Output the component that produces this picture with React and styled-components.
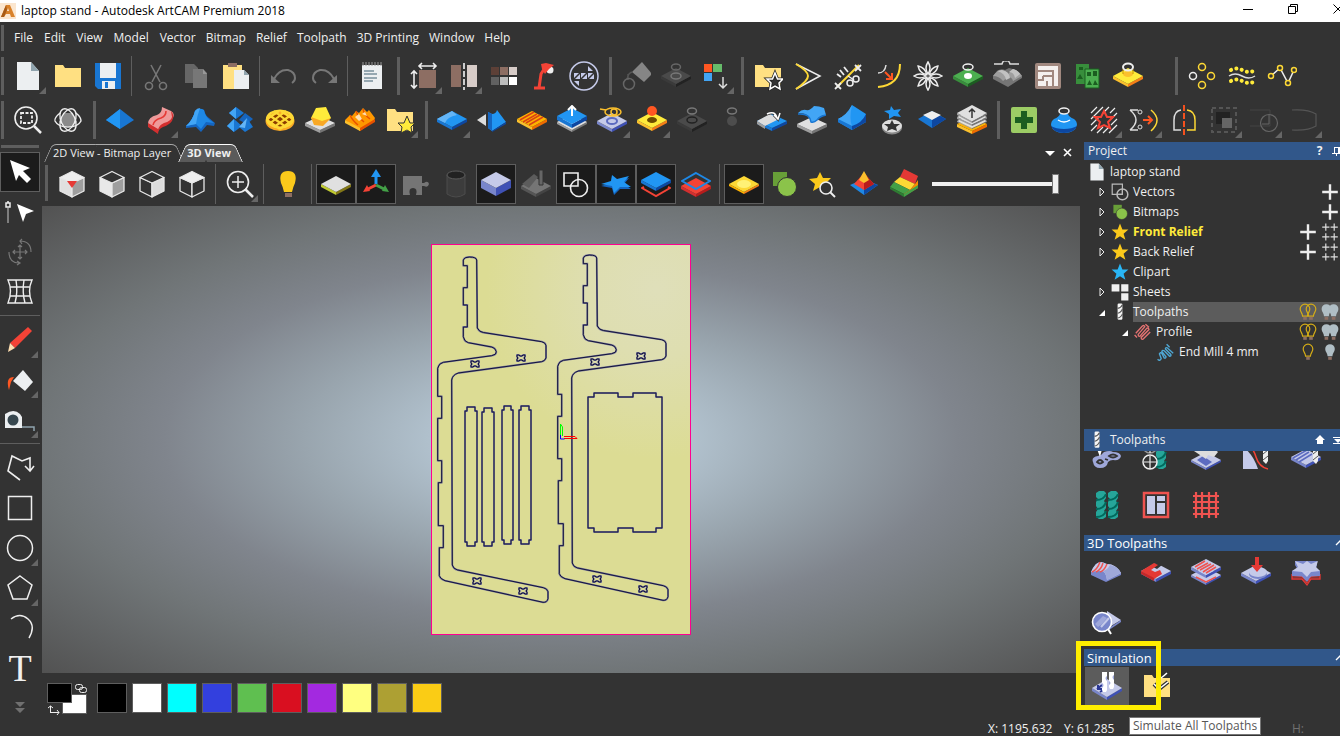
import { useState } from "react"
import styled, { createGlobalStyle, css } from "styled-components"

// ---------- drawing helpers, every icon lives in a 30x30 box ----------

function Slab({ x = 15, y = 14, w = 15, h = 8, t = 3, top, left, right }) {
  return (
    <>
      <path d={`M${x - w} ${y}L${x} ${y + h}v${t}L${x - w} ${y + t}z`} fill={left} />
      <path d={`M${x + w} ${y}L${x} ${y + h}v${t}L${x + w} ${y + t}z`} fill={right} />
      <path d={`M${x} ${y - h}L${x + w} ${y}L${x} ${y + h}L${x - w} ${y}z`} fill={top} />
    </>
  )
}

const BLUE = { top: "#2196f3", left: "#1976d2", right: "#0d47a1" }
const LILAC = { top: "#c5cae9", left: "#7986cb", right: "#3f51b5" }
const YELLOW = { top: "#ffeb3b", left: "#fbc02d", right: "#f57f17" }
const GREY = { top: "#e0e0e0", left: "#9e9e9e", right: "#757575" }
const DIM = { top: "#4a4a4a", left: "#3a3a3a", right: "#222" }
const STAR = "M15 1l4 10h10l-8 7 3 10-9-6-9 6 3-10-8-7h10z"
const FLAT_STAR = "M11 6L16 10L28 7L23 13L30 18L19 18L13 24L11 17L0 15L10 12z"

const line = (stroke, width = 1.5) => ({ fill: "none", stroke, strokeWidth: width })

function Cube({ top, left, right }) {
  const edge = { stroke: "#e8e8e8", strokeWidth: 1.3, strokeLinejoin: "round" }
  return (
    <>
      <path d="M3 8.500L15 14v14L3 22z" fill={left} {...edge} />
      <path d="M27 8.500L15 14v14l12-6z" fill={right} {...edge} />
      <path d="M15 2.500l12 6L15 14 3 8.500z" fill={top} {...edge} />
    </>
  )
}

function Mill({ x = 8, fill = "#f5f5f5", dark = "#555" }) {
  return (
    <>
      <rect x={x} y="1" width="8" height="27" rx="2" fill={fill} />
      <path d={`M${x} 9q6-1 8-6M${x} 17q6-1 8-7M${x} 25q6-1 8-7`} {...line(dark, 1.8)} />
    </>
  )
}

// fat helical cutter
function Helix({ x }) {
  return (
    <>
      <path d={`M${x} 3l3-2h5l2 2v5l-2 3 2 3v4l-2 3 2 2v4l-3 2h-4l-3-2v-5l2-3-2-3v-4l2-3-2-2z`} fill="#26a69a" />
      <path d={`M${x} 10q8 0 10-6M${x} 19q8 0 10-7M${x} 27q8 0 10-6`} {...line("#00695c", 2)} />
    </>
  )
}

function Bulb({ x = 15, fill = "none", stroke = "none" }) {
  return (
    <>
      <path d={`M${x - 4} 22c0-5-4-7-4-12a8 8 0 0 1 16 0c0 5-4 7-4 12z`} fill={fill} stroke={stroke} strokeWidth="2" />
      <path d={`M${x - 3} 23h6v5h-6z`} fill="#8d6e63" />
    </>
  )
}

const icons = {
  page: <><path d="M4 1h14l8 9v19H4z" fill="#eceff1" /><path d="M18 1v9h8z" fill="#90a4ae" /></>,
  folder: <path d="M2 4h8l2 3h16v19H2z" fill="#ffe082" />,
  save: <><path d="M2 2h26v26H5l-3-3z" fill="#1976d2" /><path d="M7 2h16v15H7zM9 20h13v8H9z" fill="#eceff1" /><path d="M12 21h3v6h-3z" fill="#1976d2" /></>,
  cut: <g {...line("#777", 1.6)}><path d="M10 4l9 17M20 4l-9 17" /><circle cx="8" cy="25" r="3.500" /><circle cx="22" cy="25" r="3.500" /></g>,
  copy: <><path d="M4 3h9l4 4v15H4z" fill="#666" /><path d="M12 8h10l4 4v15H12z" fill="#777" /><path d="M22 8v5h4z" fill="#999" /></>,
  paste: <><path d="M2 4h19v24H2z" fill="#ffe082" /><path d="M7 2h9v4H7z" fill="#8d6e63" /><path d="M13 9h10l5 5v14H13z" fill="#eceff1" /><path d="M23 9v5h5z" fill="#90a4ae" /></>,
  undo: <><path d="M5 18q5-10 14-9 7 2 7 8 0 3-3 5" {...line("#777", 2)} /><path d="M2 14v8h9z" fill="#777" /></>,
  redo: <><path d="M25 18q-5-10-14-9-7 2-7 8 0 3 3 5" {...line("#777", 2)} /><path d="M28 14v8h-9z" fill="#777" /></>,
  notes: <><path d="M5 4h20v24H5z" fill="#eceff1" /><path d="M6 1v4M9 1v4M12 1v4M15 1v4M18 1v4M21 1v4M24 1v4" {...line("#999", 1)} /><path d="M7 10h10M7 13h13M7 17h13M7 20h9" {...line("#78909c", 1.5)} /></>,
  resize: <><path d="M10 9h17v18H10z" fill="#8d6e63" /><path d="M11 5h15M13 2l-3 3 3 3M24 2l3 3-3 3M5 11v15M2 13l3-3 3 3M2 24l3 3 3-3" {...line("#eee", 1.6)} /></>,
  mirror: <><path d="M2 4h10v22H2z" fill="#8d6e63" /><path d="M18 4h10v22H18z" fill="#d7ccc8" /><path d="M15 2v27" {...line("#ccc", 2)} strokeDasharray="6 2" /></>,
  palette: <>{["#5d4037", "#8d6e63", "#d7ccc8", "#616161", "#bdbdbd", "#fff"].map((c, i) => <rect key={c} x={2 + (i % 3) * 9} y={i < 3 ? 6 : 16} width="8" height="8" fill={c} />)}</>,
  lamp: <><path d="M5 27h11M10 27l2-14 5-8" {...line("#f44336", 3)} /><circle cx="21" cy="9" r="3.500" fill="#eee" /><path d="M12 3l5-1 8 2-5 4-4 5-3-5z" fill="#f44336" /></>,
  ring: <><circle cx="15" cy="15" r="14" {...line("#c5cae9")} /><path d="M5 12h6v6H5zM12 12h6v6h-6zM19 12h6v6h-6zM19 5v5h5zM5 20h5v5z" fill="#c5cae9" /><path d="M5 18l6-6M12 18l6-6M19 18l6-6" {...line("#333", 1.500)} /></>,
  bucket: <><path d="M21 1l10 12-8 8-12-10z" fill="#858585" /><path d="M12 11q-5 0-6 8M7 13v6" {...line("#555")} /><circle cx="8" cy="23" r="5.500" {...line("#666")} /></>,
  slabDim: <><Slab {...DIM} y={15} /><ellipse cx="15" cy="15" rx="5" ry="3" {...line("#777")} /><ellipse cx="15" cy="6" rx="4.500" ry="3" {...line("#666")} /></>,
  slabHole: <><Slab {...DIM} y={16} /><ellipse cx="15" cy="15" rx="5" ry="3" {...line("#222")} /><ellipse cx="15" cy="6" rx="4.500" ry="3" {...line("#777")} /></>,
  dotDim: <><circle cx="15" cy="16" r="5" fill="#4d4d4d" /><ellipse cx="15" cy="6" rx="4.500" ry="3" {...line("#777")} /></>,
  sort: <><path d="M3 3h8v8H3z" fill="#ff5722" /><path d="M12 3h9v8h-9z" fill="#66bb6a" /><path d="M3 12h8v8H3z" fill="#42a5f5" /><path d="M22 16v11M18 23l4 4 4-4" {...line("#ddd")} /></>,
  folderStar: <><path d="M2 4h8l2 3h16v19H2z" fill="#ffe082" /><path d="M22 12l2.500 6H30l-4 4 1 6-5-3-5 3 1-6-4-4h5.500z" fill="#333" stroke="#222" strokeWidth="3" /><path d="M22 12l2.500 6H30l-4 4 1 6-5-3-5 3 1-6-4-4h5.500z" {...line("#fff")} /></>,
  folderStarY: <><path d="M2 4h8l2 3h16v19H2z" fill="#ffe082" /><path d="M22 11l3 7h5l-4 4 1 6-5-3-6 3 1-6-4-4h6z" fill="#ffeb3b" stroke="#333" /></>,
  offset: <><path d="M3 3l24 12L3 28" {...line("#eee", 1.500)} /><path d="M3 3q12 7 12 12T3 28" {...line("#fdd835", 2)} /></>,
  trim: <><path d="M4 26L26 4" {...line("#fdd835", 2)} /><path d="M2 22l6 6M2 28l6-6M22 4l6 6M22 10l6-6M4 13l4 3M7 9l4 5M11 6l4 5" {...line("#eee", 1.8)} /><path d="M15 15l6 4" {...line("#eee")} /><circle cx="17" cy="22" r="3" {...line("#eee")} /><circle cx="23" cy="18" r="3" {...line("#eee")} /></>,
  fillet: <><path d="M5 12q7 0 8-8" {...line("#ddd")} /><path d="M27 3q0 21-22 23" {...line("#fdd835", 2)} /><path d="M12 11l6 6M19 12v6h-6" {...line("#ff5722", 2)} /></>,
  flower: <g {...line("#eee", 1.5)}>{[0, 45, 90, 135, 180, 225, 270, 315].map((a) => <path key={a} transform={`rotate(${a} 15 15)`} d="M15 13q-4-6 0-12 4 6 0 12z" />)}</g>,
  slabGreen: <><Slab y={15} top="#4caf50" left="#388e3c" right="#1b5e20" /><ellipse cx="15" cy="15" rx="4" ry="3" fill="#fff" /><ellipse cx="15" cy="6" rx="5" ry="3" {...line("#eee")} /></>,
  bumps: <><path d="M0 15l4-5q4-3 8-1l4-2q7 1 13 8v2l-14 9L0 18z" fill="#757575" /><path d="M0 15q4-6 9-6 4 1 6 4l5-5q6 2 9 7l-9 5q-1-4-5-4l-5 4q-4-5-10-5z" fill="#9e9e9e" /><path d="M9 9q7 1 8 8l-4 2q-1-7-9-9zM20 8q5 1 7 5l-5 4q-1-6-6-6z" fill="#c2c2c2" /><path d="M1 3h8q1-4 4-3 3-1 4 3h9" {...line("#ddd")} /></>,
  maze: <><rect x="2" y="2" width="26" height="26" rx="2" fill="#a1887f" /><path d="M5 5h20v20H5z" fill="#f5f0ee" /><path d="M5 10h15v15M10 15h10M10 15v4H5M14 20v5" {...line("#a1887f", 2)} /></>,
  nest: <><path d="M3 3h13v20H3z" fill="#388e3c" /><path d="M12 8h14v19H12z" fill="#4caf50" stroke="#1b5e20" /><path d="M4 18l3-5 3 5zM14 24l2.500-5 2.500 5zM20 24l2-5 3 5zM14 11h4v4h-4zM20 10h4v5h-4zM6 6h4v3H6z" fill="#1b5e20" /></>,
  slabPin: <><Slab y={15} {...YELLOW} /><ellipse cx="15" cy="13" rx="5" ry="3" fill="#fbc02d" /><path d="M10 8v5M20 8v5" {...line("#c49000", 1)} /><ellipse cx="15" cy="6" rx="5" ry="3.500" {...line("#eee", 2)} /></>,
  dots4: <><g {...line("#fdd835")}><circle cx="15" cy="6" r="3.500" /><circle cx="24" cy="15" r="3.500" /><circle cx="15" cy="24" r="3.500" /></g><circle cx="6" cy="15" r="3.500" {...line("#eee")} /></>,
  wave: <><path d="M2 15q6-4 13 0t13 0" {...line("#ddd")} /><path d="M4 9q6-3 11 0t12 1M4 20q6-3 11 0t12 1" fill="none" stroke="#ffeb3b" strokeWidth="4" strokeLinecap="round" strokeDasharray="0.100 5.400" /></>,
  nodes: <><path d="M4 15l9-8 8 15 6-13" {...line("#eee")} /><g fill="#333" stroke="#fdd835" strokeWidth="1.5"><circle cx="4" cy="15" r="2.500" /><circle cx="13" cy="7" r="2.500" /><circle cx="21" cy="22" r="2.500" /><circle cx="27" cy="9" r="2.500" /></g></>,

  zoomBox: <><circle cx="13" cy="13" r="11" {...line("#eee", 1.600)} /><path d="M21 21l7 7" {...line("#eee", 2.500)} /><path d="M8 8h11v10H8z" {...line("#eee", 1.800)} strokeDasharray="3 1.500" /></>,
  orbit: <><path d="M12 8h7l5 9-4 4H11l-5-4z" fill="#8a8a8a" /><g {...line("#eee", 1.400)}><ellipse cx="15" cy="15" rx="7" ry="12" transform="rotate(25 15 15)" /><ellipse cx="15" cy="15" rx="7" ry="12" transform="rotate(-25 15 15)" /><path d="M7 8q-6 5-5 8 3 6 13 6t13-6q0-4-5-8" /></g></>,
  diamond: <><path d="M1 15l14 9 14-9L15 4z" fill="#1976d2" /><path d="M1 15L15 4v20z" fill="#2196f3" /></>,
  ribbon: <><path d="M3 19q0-7 9-9 5-2 5-8l9 4q5 3 1 8-3 4-9 6-5 2-5 7L5 23q-2-2-2-4z" fill="#ef9a9a" /><path d="M3 18v4l10 7v-5zM26 6q4 4 1 10-3 4-9 6-5 2-5 7v-4q1-5 6-7 7-2 8-6z" fill="#d32f2f" /><path d="M8 20q1-5 8-7 5-2 5-7" {...line("#e53935", 1.6)} /></>,
  star3d: <><path d="M10 6q4-4 9-1 1 5 5 8l6 5-1 3-7-1-6 7-5-5-10 1v-2q7-6 9-15z" fill="#1565c0" /><path d="M10 6q4-4 9-1 1 8 10 13l-8-1-5 7-5-5-10 2q7-6 9-15z" fill="#1e88e5" /><path d="M10 6q2-3 5-3-3 8-4 16l-10 2q7-6 9-15z" fill="#42a5f5" /></>,
  clusters: <><path d="M11 2l8 6-8 6-7-6z" fill="#1976d2" /><path d="M11 2v12L4 8z" fill="#42a5f5" /><path d="M20 8l8 6-6 5-8-4z" fill="#1565c0" /><path d="M9 14l8 7-8 6-7-6z" fill="#1976d2" /><path d="M9 14v13l-7-6z" fill="#42a5f5" /><path d="M22 13l6 9-8 5-6-5z" fill="#1976d2" /><path d="M22 13l-2 10-6-1z" fill="#64b5f6" /></>,
  weave: <><ellipse cx="15" cy="15" rx="14" ry="10" fill="#8a3b00" /><g {...line("#f9a825", 3)}><ellipse cx="15" cy="16" rx="13" ry="8.500" /></g><g {...line("#fdd835", 2.200)}><ellipse cx="15" cy="14" rx="13" ry="8.500" /><path d="M4 10l17 12M2 15l13 9M9 6l17 13M16 6l12 8M26 10L9 22M28 15l-13 9M21 6L4 19M14 6L2 14" /></g></>,
  gem: <><Slab y={18} h={7} {...GREY} /><path d="M11 3l10-1 5 11-8 7-9-1-3-6z" fill="#ffeb3b" /><path d="M6 12l3 8 9 1 8-8-9 3z" fill="#f9a825" /></>,
  ridges: <><path d="M0 15l5-5 2 1 4-5 3 2 4-5 4 4 2-2 6 8-2 4-13 9z" fill="#ff9800" /><path d="M0 15l15 8v3L0 18z" fill="#fbc02d" /><path d="M15 23l15-9v3l-15 9z" fill="#e65100" /><path d="M5 10q2 5 8 10M11 6q2 6 8 11M18 4q1 6 7 10" {...line("#e65100")} /><path d="M10 12l4-3 3 5-3 2zM17 9l3-2 2 4z" fill="#ffe0b2" /></>,
  blueSlab: <><Slab {...BLUE} /><path d="M15 6L0 14l8 4q2-6 12-8z" fill="#64b5f6" /></>,
  wedge: <><path d="M0 15l9-6v12z" fill="#ddd" /><path d="M11 7l4 2q4 0 5-4l9 12-14 9-4-3z" fill="#2196f3" /><path d="M11 7l4 2v17l-4-3z" fill="#1565c0" /><path d="M15 26l14-9v2l-14 8z" fill="#0d47a1" /></>,
  ribbed: <><Slab y={14} top="#ffb300" left="#fbc02d" right="#ef6c00" /><path d="M3 15l14-8M6 17l14-8M9 18l14-8M12 20l14-8" {...line("#d84315", 1.500)} /></>,
  lift: <><Slab y={17} t={2} {...GREY} /><Slab y={11} t={4} {...BLUE} /><path d="M15 11V2M11 5l4-4 4 4" {...line("#fff", 2)} /></>,
  target: <><Slab y={16} {...LILAC} /><ellipse cx="15" cy="16" rx="5" ry="3" {...line("#5c6bc0", 2)} /><ellipse cx="16" cy="7" rx="8" ry="4" {...line("#fbc02d")} /><circle cx="17" cy="7" r="3" {...line("#fbc02d")} /><path d="M3 4l6 1" {...line("#fbc02d")} /></>,
  ball: <><Slab y={15} {...YELLOW} /><ellipse cx="15" cy="15" rx="5" ry="3" fill="#6d4c00" /><circle cx="15" cy="6" r="5" fill="#ff5722" /></>,
  swap: <><Slab y={16} h={7} t={3} {...BLUE} /><path d="M0 16l13-7 9 5-14 7z" fill="#ddd" /><path d="M0 16l8 5v3l-8-5z" fill="#9e9e9e" /><path d="M10 9q8-4 10 4M17 10l4 4 2-6" {...line("#333", 3)} /><path d="M10 9q8-4 10 4M17 10l4 4 2-6" {...line("#fff", 1.500)} /></>,
  drape: <><Slab y={19} h={7} {...GREY} /><path d="M1 8q4-4 8-3t8-4q5 0 10 2l2 7q-6 0-9 5-4 4-7 1 0-8-12-8z" fill="#42a5f5" /><path d="M1 9q12-1 13 8 3 1 6-2 3-4 9-5" {...line("#1976d2")} /></>,
  slope: <><path d="M1 14Q10 10 15 0l14 9v8l-14 8L1 17z" fill="#2196f3" /><path d="M1 14Q10 10 15 0q-3 14 0 21z" fill="#42a5f5" /><path d="M29 9v8l-14 8v-4q10-3 14-12z" fill="#0d47a1" /><path d="M1 14l14 7v4L1 17z" fill="#1976d2" /></>,
  stamp: <><path d="M14 1l3 4 7-1-3 4 3 4-7-1-5 3 0-5-5-3 6-1z" fill="#2196f3" /><ellipse cx="15" cy="23" rx="10" ry="6.500" fill="#888" /><ellipse cx="15" cy="21" rx="10" ry="6.500" fill="#ddd" /><path d="M15 15l2 4h6l-4 3 1 4-5-2-5 2 1-4-4-3h6z" fill="#333" /></>,
  frame: <><path d="M1 14l14-8 14 8-14 9z" fill="#1976d2" /><path d="M29 14l-14 9v-9l6-4z" fill="#0d47a1" /><path d="M15 6l9 4-9 5-9-5z" fill="#eee" /></>,
  stack: <><Slab y={19} h={7} t={3} top="#ffb300" left="#fbc02d" right="#ef6c00" /><Slab y={16} h={7} t={1} {...GREY} /><Slab y={12} h={7} t={2} {...GREY} /><Slab y={8} h={8} t={2} {...GREY} /><path d="M15 13V4M12 7l3-3 3 3" {...line("#333")} /></>,
  addGreen: <><rect x="2" y="2" width="26" height="26" rx="2" fill="#9ccc65" /><path d="M15 6v18M6 15h18" {...line("#1b5e20", 6)} /></>,
  bag: <><path d="M11 9h8q1 3 6 5 3 2 3 6-2 8-13 8T2 20q0-4 3-6 5-2 6-5z" fill="#2196f3" /><path d="M2 21q3 7 13 7t13-7q-5 3-13 3T2 21z" fill="#0d47a1" /><ellipse cx="15" cy="6" rx="5" ry="3" {...line("#eee", 1.600)} /><path d="M9 15q6 4 12 0" {...line("#fff")} /></>,
  hatchStar: <><path d="M2 8l6-6M2 14L14 2M2 20l8-8M20 2l-6 6M26 3l-5 5M28 8l-6 6M28 14l-6 6M28 20l-8 8M2 26l6-6M8 28l6-6M20 22l-6 6" {...line("#eee", 1.200)} /><path d="M15 6l3 6h6l-5 5 2 6-6-3-6 3 2-6-5-5h6z" {...line("#f44336", 2)} /></>,
  joinArc: <><path d="M1 5q12 10 0 20M1 5h8M1 25h8" {...line("#ddd")} /><circle cx="11" cy="7" r="2" {...line("#ddd", 1)} /><circle cx="11" cy="22" r="2" {...line("#ddd", 1)} /><path d="M14 15h9M19 11l4 4-4 4" {...line("#ff5722", 2)} /><path d="M22 5q12 10 0 21" {...line("#fdd835")} /></>,
  mirrorArc: <><path d="M12 5Q5 6 5 15v10h7" {...line("#ddd")} /><path d="M18 5q8 1 8 10v10h-8" {...line("#fdd835")} /><path d="M15 0v30" {...line("#f4511e", 2)} strokeDasharray="6 2" /></>,
  selDim: <><path d="M3 3h24v24H3z" {...line("#555", 2)} strokeDasharray="4 3" /><path d="M7 7h14v12H7z" fill="#222" /><path d="M13 13h10v10H13z" fill="#666" /></>,
  arcDim: <><path d="M1 5h20v16H1" {...line("#444", 1)} /><circle cx="20" cy="18" r="8.500" {...line("#666", 1.200)} /><path d="M20 10v9h-7" {...line("#666", 1)} /></>,
  curveDim: <path d="M3 5q16-1 24 4v12q-8 5-24 4" {...line("#555", 1.200)} />,

  cubeIso: <><Cube top="#eee" left="#e0e0e0" right="#9e9e9e" /><path d="M10 12l10 0-5 7z" fill="#e53935" /></>,
  cubeA: <Cube top="#333" left="#e8e8e8" right="#9e9e9e" />,
  cubeB: <Cube top="#333" left="#333" right="#ddd" />,
  cubeC: <Cube top="#eee" left="#333" right="#333" />,
  zoomIn: <><circle cx="13" cy="13" r="10.500" {...line("#eee", 1.600)} /><path d="M20 20l8 8" {...line("#eee", 2.500)} /><path d="M13 7v12M7 13h12" {...line("#eee")} /></>,
  bulb: <><path d="M11 23Q10 18 8 14q-3-12 7-12t7 12q-2 4-3 9z" fill="#fbc91b" /><path d="M12 24h7v4h-7z" fill="#8d6e63" /></>,
  slabWhite: <Slab y={15} t={3} top="#e0e0e0" left="#c0ca33" right="#827717" />,
  axes: <><path d="M15 15V5" {...line("#2196f3", 3)} /><path d="M10 8l5-8 5 8z" fill="#2196f3" /><path d="M15 16L5 21" {...line("#f44336", 3)} /><path d="M2 23l4-7 3 6z" fill="#f44336" /><path d="M15 16l10 5" {...line("#43a047", 3)} /><path d="M28 23l-4-7-3 6z" fill="#43a047" /></>,
  puzzle: <path d="M2 7h19v7h2q4-3 5 1-1 4-5 2h-2v9h-6q2-7-3-7t-3 7H2z" fill="#757575" />,
  tube: <><path d="M6 6v19q9 6 18 0V6z" fill="#3c3c3c" stroke="#4c4c4c" /><ellipse cx="15" cy="6" rx="9" ry="4" fill="#222" stroke="#5c5c5c" /></>,
  block: <Slab y={11} h={8} t={8} top="#c5cae9" left="#7986cb" right="#3f51b5" />,
  milling: <><Slab y={17} t={3} top="#757575" left="#555" right="#444" /><path d="M1 15L13 5l4 3L8 19z" fill="#5c5c5c" /><path d="M18 1h4v15h-4z" fill="#666" stroke="#333" /></>,
  vectors: <><path d="M3 4h14v13H3z" {...line("#eee", 1.600)} /><circle cx="18" cy="19" r="8.500" fill="#1c1c1c" stroke="#eee" strokeWidth="1.6" /><path d="M17 10v7H10" {...line("#eee")} /></>,
  blueStar: <><path transform="translate(0 2)" d={FLAT_STAR} fill="#1565c0" /><path d={FLAT_STAR} fill="#2196f3" /></>,
  slabBlueRed: <><path d="M3 18l-2 1 14 8 14-8-2-1" {...line("#f44336", 2)} /><Slab y={11} t={3} {...BLUE} /></>,
  slabRedBlue: <><Slab y={17} t={3} top="#f44336" left="#d32f2f" right="#b71c1c" /><path d="M15 4l14 8-14 8-14-8z" {...line("#1e88e5", 2)} /></>,
  slabGold: <><Slab y={15} t={2} top="#fdd835" left="#ffb300" right="#f57f17" /><ellipse cx="15" cy="15" rx="7" ry="4" fill="#fff176" /></>,
  shapes: <><path d="M4 3h14v14H4z" fill="#689f38" /><circle cx="18" cy="18" r="9.500" fill="#8bc34a" stroke="#333" /></>,
  starZoom: <><path d="M11 3l3 6h8l-6 6 2 6-7-3-7 4 2-7-6-5 8-1z" fill="#fbc91b" /><circle cx="17" cy="19" r="6" fill="#333" stroke="#eee" strokeWidth="1.6" /><path d="M21 23l5 5" {...line("#eee", 2)} /></>,
  pyramid: <><path d="M1 16l14-6 14 6-14 10z" fill="#1e88e5" /><path d="M15 12v14l14-10z" fill="#0d47a1" /><path d="M15 4l10 11-10 6-10-6z" fill="#f44336" /><path d="M15 4v17l10-6z" fill="#b71c1c" /><path d="M15 2l5 9-5 3-5-3z" fill="#fbc02d" /></>,
  layers: <><path d="M15 0l14 7-3 8-15-7z" fill="#e53935" /><path d="M11 8l15 7-5 6-16-8z" fill="#fdd835" /><path d="M5 13l16 8-6 4-14-7z" fill="#43a047" /><path d="M1 18l14 7v3L1 20z" fill="#2e7d32" /><path d="M29 11v4l-8 6 5-6zM29 15v4l-14 8v-2l6-4z" fill="#fb8c00" /><path d="M15 25l14-9v3l-14 9z" fill="#43a047" /></>,

  arrow: <path d="M5 3l20 8-7 3 8 8-4 4-8-8-3 6z" fill="#fff" />,
  nodeArrow: <><path d="M3 11v15" {...line("#999", 1.500)} /><path d="M1 6h4v4H1zM3 4v2" {...line("#eee")} /><path d="M12 7l17 7-8 3-3 8z" fill="#fff" /></>,
  rotate: <g {...line("#777", 1.200)}><path d="M15 8v14M8 15h14M13 10l2-2 2 2M13 20l2 2 2-2M10 13l-2 2 2 2M20 13l2 2-2 2M15 4q11 0 11 11M4 15q0 11 10 11M17 2l-2 2 2 3M12 24l3 2-3 2" /></g>,
  warp: <g {...line("#eee", 1.400)}><path d="M3 3h24q-5 11 0 23H3q5-12 0-23zM5 10h20M5 19h20M11 3q2 12-1 23M19 3q-2 12 1 23" /></g>,
  pencil: <><path d="M23 2l4 4-17 17-5-5z" fill="#f44336" /><path d="M5 18l5 5-7 4z" fill="#ffe0b2" /></>,
  pour: <><path d="M18 5l10 12-8 9L8 16z" fill="#eceff1" /><path d="M9 12q-9 0-5 13 1-4 2-8z" fill="#ff5722" /></>,
  tape: <><path d="M0 9q9-6 15 0l2 3v11H0z" fill="#eceff1" /><circle cx="8" cy="15" r="5.500" fill="#37474f" /><path d="M17 22h12v4" {...line("#90a4ae")} /></>,
  polyline: <path d="M15 27L3 18 7 3l10 5 8-3v13M20 13l5 5 4-5" {...line("#eee", 1.600)} />,
  square: <path d="M3.500 3.500h23v23h-23z" {...line("#eee", 1.500)} />,
  circle: <circle cx="15" cy="15" r="12.500" {...line("#eee", 1.500)} />,
  pentagon: <path d="M15 3l12 9-5 14H8L3 12z" {...line("#eee", 1.500)} />,
  arc: <path d="M6 6q9-7 17 0t1 19" {...line("#eee", 1.500)} />,

  letters: <><path d="M2 22q-2-5 5-6 4-1 6-4 6-2 9 0 7 0 8 4-1 5-8 4-3 0-5 2-1 6-8 6-6 0-7-6z" fill="#9fa8da" /><path d="M6 22q3-4 6 0-3 3-6 0zM18 16q4-3 8 0-4 3-8 0zM14 19l3 1" {...line("#333", 1.800)} /><path d="M6 9l3 8 2-8z" fill="#fff" /></>,
  drillMill: <><Helix x={15} /><circle cx="9" cy="22" r="7" fill="#333" stroke="#eee" strokeWidth="1.5" /><circle cx="9" cy="6" r="7" fill="#333" stroke="#999" strokeWidth="1.5" /><path d="M9 16v13M3 22h13M2 9h14M9 4v9" {...line("#eee", 1.200)} /></>,
  inlay: <><Slab y={20} h={8} t={2} {...LILAC} /><path d="M6 20l6-4 9 6-6 4z" fill="#5c6bc0" /><path d="M3 11l14-7 10 8-4 5-6-2-2 4z" fill="#ddd" /></>,
  chartMill: <><path d="M2 7q10 7 15 22H2z" fill="#c5cae9" /><path d="M5 3q7 4 10 14t12 12" {...line("#f44336")} /><path d="M22 3h5v18l-2 3-3-3z" fill="#eee" /><path d="M22 14l5-4M22 20l5-4" {...line("#555", 1)} /></>,
  groove: <><Slab y={17} h={8} t={3} {...LILAC} /><path d="M2 18l14-8M5 20l13-8M8 22l13-8" {...line("#5c6bc0", 1.600)} /><path d="M22 1h5v20l-2 3-3-3z" fill="#eee" /><path d="M22 14l5-4M22 20l5-4" {...line("#555", 1)} /></>,
  mills: <><Helix x={5} /><Helix x={17} /></>,
  door: <><rect x="3" y="3" width="24" height="24" fill="#333" stroke="#ef5350" strokeWidth="2.500" /><path d="M6 6h8v18H6zM16 6h8v5h-8zM16 13h8v11h-8z" fill="#c5cae9" /></>,
  grid: <path d="M2 6h26M2 12h26M2 18h26M2 24h26M5 2v26M11 2v26M18 2v26M25 2v26" {...line("#ef5350", 2.200)} />,
  relief: <><path d="M0 15l5-8q5-4 10 0 8-1 15 9v2l-15 7L0 18z" fill="#7986cb" /><path d="M0 15q4-10 10-10 4 1 6 2 9 0 14 9l-14 7q-1-9-6-9-5 0-10 1z" fill="#c5cae9" /><path d="M16 23q-1-9-6-9 6 0 9-6 8 1 11 8z" fill="#9fa8da" /><path d="M1 15q5-2 8-10M5 15q5-2 7-9M9 15q4-1 7-8" {...line("#ef5350")} /></>,
  rough: <><Slab {...LILAC} /><path d="M15 5l6 3-5 4-4-2z" fill="#333" /><path d="M0 14l13-8 4 2-7 5 4 2 5-2 2 4-8 5z" fill="#e53935" /><path d="M0 14l13 7v3L0 17z" fill="#c62828" /></>,
  zLevel: <><Slab y={18} h={8} t={2} {...LILAC} /><Slab y={10} h={8} t={3} {...LILAC} /><path d="M4 10l10-6M6 12l11-6M9 13l11-6M12 15l11-7M15 16l10-6M5 20l10 5 10-5" {...line("#ef5350", 1.500)} /></>,
  drill: <><Slab y={16} h={8} t={3} {...LILAC} /><ellipse cx="17" cy="17" rx="9" ry="5" fill="#7986cb" /><ellipse cx="17" cy="15" rx="9" ry="5" fill="#c5cae9" /><path d="M14 0h4v8h4l-6 7-6-7h4z" fill="#e53935" /></>,
  starCut: <><path d="M1 17v5h10l5 6 4-6h9v-5" {...line("#e53935", 1.300)} /><path d="M4 4v4l3 5-6 1v5l10 1 5 5 4-5 9-1v-5l-4-3 1-3V4z" fill="#7986cb" /><path d="M4 4l8 3 4-3 4 3 7-3-2 6 4 4-9 1-4 5-5-5-10-1 6-4z" fill="#c5cae9" /><path d="M1 20h10l5 6 4-6h9" {...line("#e53935", 1)} /></>,
  inspect: <><path d="M16 4l14 9-15 9z" fill="#c5cae9" /><path d="M30 13v2l-12 8v-2z" fill="#7986cb" /><circle cx="11" cy="15" r="9.500" fill="#7986cb" stroke="#fff" strokeWidth="1.6" /><path d="M4 17l8-8 4 2-5 6-4 3z" fill="#9fa8da" /><path d="M10 20l8-9" {...line("#c5cae9", 2)} /><path d="M17 22l3 5" {...line("#fff", 2)} /></>,
  simulate: <><Slab y={17} h={9} t={3} {...LILAC} /><path d="M5 18l5-4M8 21l6-4M6 14v4h4" {...line("#283593", 2)} /><path d="M10 1h5v18l-1 2h-3l-1-2zM17 1h5v15l-1 2h-3l-1-2z" fill="#fff" /><path d="M15 5q-3 2 0 5M10 12q3 2 0 5M22 4q-3 2 0 5M17 10q3 2 0 4" fill="#9fa8da" /></>,
  folderCheck: <><path d="M2 4h8l2 3h16v19H2z" fill="#ffe082" /><path d="M12 13l5 5 9-7M17 12l-4 3" {...line("#333", 4)} /><path d="M12 13l5 5 9-7M19 7q4-3 6-5" {...line("#fff", 1.500)} /></>,

  shapesLine: <><path d="M2 2h17v17H2z" {...line("#bbb", 2)} /><circle cx="19" cy="19" r="9" {...line("#bbb", 2.500)} /><path d="M19 11v8h-8" {...line("#bbb", 2)} /></>,
  starGold: <path d={STAR} fill="#fbc91b" />,
  starCyan: <path d={STAR} fill="#29b6f6" />,
  sheets: <path d="M1 2h13v12H1zM17 2h12v12H17zM17 17h12v12H17z" fill="#f0f0f0" />,
  mill: <Mill x={11} />,
  profile: <path d="M3 17L14 5q3-2 4 1L7 19q0 4 3 3L21 9q3-2 4 2L12 24q0 4 3 3l12-12M1 20l4 4M19 2l6 5" {...line("#e57373", 2.300)} />,
  endMill: <path d="M1 27q4 4 6-1l-3-8q2-3 4-1l4 8q3 1 3-2l-7-9q1-3 4-1l9 9q3 0 2-3l-9-9q0-3 3-2l10 9M16 2l5 5" {...line("#4fa8d5", 2.300)} />,
  plus: <path d="M15 2v26M2 15h26" {...line("#eee", 4)} />,
  pluses: <path d="M8 1v12M2 7h12M22 1v12M16 7h12M8 17v12M2 23h12M22 17v12M16 23h12" {...line("#ddd", 2)} />,
  bulbLine: <Bulb stroke="#d4ac17" />,
  bulbFill: <Bulb fill="#b0bec5" />,
  bulbsLine: <><Bulb x={10} stroke="#d4ac17" /><Bulb x={20} stroke="#d4ac17" /></>,
  bulbsFill: <><Bulb x={9} fill="#b0bec5" /><Bulb x={21} fill="#b0bec5" /></>,
}

function Icon({ name, size = 30 }) {
  return (
    <svg width={size} height={size} viewBox="0 0 30 30" aria-hidden="true">{icons[name]}</svg>
  )
}

// "|" is a thin divider, "#" a thick grip, "*" marks a button with a fly-out
const topRow = "page* folder save | cut copy paste | undo redo | notes # resize* mirror* palette lamp ring # bucket slabDim sort* # folderStar offset trim fillet flower slabGreen bumps maze nest slabPin ~ # dots4 wave nodes"
const secondRow = "zoomBox orbit # diamond ribbon* star3d clusters weave gem ridges folderStarY* # blueSlab* wedge ribbed lift target* ball* slabHole dotDim swap drape slope stamp frame stack # addGreen bag hatchStar* joinArc* mirrorArc selDim* arcDim* curveDim*"
const viewRow = "cubeIso cubeA cubeB cubeC | zoomIn* | bulb | slabWhite! axes! puzzle tube block! milling vectors! blueStar! slabBlueRed! slabRedBlue | slabGold! shapes starZoom pyramid layers"
const sideRow = "arrow! nodeArrow rotate warp | pencil* pour* tape* | polyline square circle* pentagon* arc"

function Tools({ list, vertical }) {
  return list.split(" ").map((item, i) => {
    if (item === "|") return <Divider key={i} $vertical={vertical} />
    if (item === "#") return <Grip key={i} />
    if (item === "~") return <Spacer key={i} />
    const name = item.replace(/[*!]/g, "")
    return (
      <ToolButton key={i} aria-label={name} $menu={item.includes("*")} $on={item.includes("!")}>
        <Icon name={name} />
      </ToolButton>
    )
  })
}

const menu = ["File", "Edit", "View", "Model", "Vector", "Bitmap", "Relief", "Toolpath", "3D Printing", "Window", "Help"]

const tree = [
  { label: "laptop stand", icon: "page", depth: 0 },
  { label: "Vectors", icon: "shapesLine", depth: 1, toggle: "closed", actions: ["plus"] },
  { label: "Bitmaps", icon: "shapes", depth: 1, toggle: "closed", actions: ["plus"] },
  { label: "Front Relief", icon: "starGold", depth: 1, toggle: "closed", actions: ["plus", "pluses"], active: true },
  { label: "Back Relief", icon: "starGold", depth: 1, toggle: "closed", actions: ["plus", "pluses"] },
  { label: "Clipart", icon: "starCyan", depth: 1 },
  { label: "Sheets", icon: "sheets", depth: 1, toggle: "closed" },
  { label: "Toolpaths", icon: "mill", depth: 1, toggle: "open", actions: ["bulbsLine", "bulbsFill"], selected: true },
  { label: "Profile", icon: "profile", depth: 2, toggle: "open", actions: ["bulbsLine", "bulbsFill"] },
  { label: "End Mill 4 mm", icon: "endMill", depth: 3, actions: ["bulbLine", "bulbFill"] },
]

const colors = ["#000000", "#ffffff", "#00ffff", "#3340de", "#5fbf50", "#d90f20", "#a329e0", "#ffff80", "#ada033", "#facc15"]

const standPath = "M32.300 21.700V16q1-3 6-3 7 0 7.400 3l.6 68q2 4 6 4.500l58.400 9.200q4 1 4.300 4V114q-1 3-4.300 3.700L27.300 129q-6 2-6.600 7L21.300 321q1 4 5.400 5l85.600 17.700q4 1 4.700 4v7q-1 4-5 3.600L14 336.700q-5-2-5.700-5v-28h4v-22h-5v-43h3.400v-22H6.700v-42.400h4v-22h-4v-28q1-5 5.600-6l48.400-6.600q5-1 4.600-4-1-4-4.600-4.700L37.300 98.700q-4-1-5-6V83h4V61h-4V43.700h4v-22z"

const slots = [[34, 46, 167, 298], [51, 63, 168, 298], [71, 82, 166, 296], [88, 100, 166, 296]]
const joints = [[44, 120], [90, 114], [46, 337], [92, 347]]

function Stand() {
  return (
    <>
      <path d={standPath} />
      {joints.map(([x, y]) => (
        <path key={y} d={`M${x - 4} ${y - 3}h2l1 1h2l1-1h2v2l-1 1 1 1v2h-2l-1-1h-2l-1 1h-2v-2l1-1-1-1z`} />
      ))}
    </>
  )
}

function Contours() {
  return (
    <>
      <Stand />
      <g transform="translate(120 -2)"><Stand /></g>
      {slots.map(([l, r, t, b]) => (
        <path key={l} d={`M${l} ${t}h2v-4H${r - 2}v4h2V${b}h-2v4H${l + 2}v-4h-2z`} />
      ))}
      <path d="M157 153h6v-4h24v4h15v-4h23v4h6v131h-6v4h-23v-4h-15v4h-24v-4h-6z" />
    </>
  )
}

function Board() {
  return (
    <svg width="260" height="391" viewBox="0 0 260 391" role="img" aria-label="laptop stand">
      <defs>
        <radialGradient id="shine" gradientUnits="userSpaceOnUse" cx="225" cy="45" r="170">
          <stop offset="0" stopColor="#dfdfba" />
          <stop offset=".4" stopColor="#dedeb0" />
          <stop offset="1" stopColor="#dcdc94" />
        </radialGradient>
      </defs>
      <rect x=".5" y=".5" width="259" height="390" fill="url(#shine)" stroke="#ff0090" />
      <g fill="none" stroke="#7c7c9c" strokeWidth="1.8"><Contours /></g>
      <g fill="none" stroke="#12123a" strokeWidth="1"><Contours /></g>
      <path d="M129.500 192v-12l2 3v9" {...line("#0f0", 1)} />
      <path d="M133 194.500h13l-2-2h-11" {...line("#f00", 1)} />
      <path d="M129.500 191v4h4" {...line("#00f", 1)} />
    </svg>
  )
}

function ToolGrid({ names }) {
  return names.map((name) => (
    <CellButton key={name} aria-label={name}><Icon name={name} /></CellButton>
  ))
}

function Chevron() {
  return <svg width="10" height="10" aria-hidden="true"><path d="M1 7l4-4 4 4" {...line("#fff", 1.4)} /></svg>
}

export default function App() {
  const [tab, setTab] = useState("3D View")

  return (
    <Window>
      <GlobalStyle />
      <TitleBar>
        <svg width="16" height="16" viewBox="0 0 16 16" aria-hidden="true">
          <path d="M0 0h16v16H0z" fill="#fbe6cf" />
          <path d="M1 14L6 2h4l5 12h-4l-1-3H6l-2 3z" fill="#d9822b" />
          <path d="M7 8l1-3 1 3z" fill="#fbe6cf" />
          <path d="M1 14L6 2l1 5-3 7z" fill="#a85a15" />
        </svg>
        <Title>laptop stand - Autodesk ArtCAM Premium 2018</Title>
        <WindowButton aria-label="Minimize"><svg width="11" height="11"><path d="M0 5.500h10" {...line("#000", 1)} /></svg></WindowButton>
        <WindowButton aria-label="Restore"><svg width="11" height="11"><path d="M.5 2.500h7v7h-7zM2.500 2.500v-2h7v7h-2" {...line("#000", 1)} /></svg></WindowButton>
        <WindowButton aria-label="Close"><svg width="11" height="11"><path d="M.5.500l9 9M9.500.500l-9 9" {...line("#000", 1)} /></svg></WindowButton>
      </TitleBar>

      <MenuBar>
        <Grip $first />
        {menu.map((m) => <MenuItem key={m}>{m}</MenuItem>)}
      </MenuBar>
      <ToolRow><Grip $first /><Tools list={topRow} /></ToolRow>
      <ToolRow><Grip $first /><Tools list={secondRow} /></ToolRow>

      <Main>
        <SideBar>
          <SideGrip />
          <Tools list={sideRow} vertical />
          <TextTool>T</TextTool>
          <More aria-label="More tools">
            <svg width="10" height="12"><path d="M0 0h10L5 5zM0 6h10l-5 5z" fill="#707070" /></svg>
          </More>
        </SideBar>

        <Center>
          <Tabs>
            {["2D View - Bitmap Layer", "3D View"].map((t) => (
              <Tab key={t} $active={t === tab} onClick={() => setTab(t)}><span>{t}</span></Tab>
            ))}
            <TabActions>
              <PlainButton aria-label="Views"><svg width="10" height="10"><path d="M0 3h10L5 8z" fill="#fff" /></svg></PlainButton>
              <PlainButton aria-label="Close view"><svg width="10" height="10"><path d="M1 1l7 7M8 1L1 8" {...line("#fff", 1.6)} /></svg></PlainButton>
            </TabActions>
          </Tabs>
          <ViewTools>
            <Grip $view />
            <Tools list={viewRow} />
            <Slider type="range" aria-label="Transparency" defaultValue="100" />
          </ViewTools>
          <Viewport><Board /></Viewport>
          <Palette>
            <Pair>
              <PairColor aria-label="Secondary colour" $back />
              <PairColor aria-label="Primary colour" />
              <svg width="40" height="34" aria-hidden="true">
                <path d="M3.500 30v-7M1 25l2.500-2 2.500 2M3 29.500h9M10 27l2 2.500-2 2.500" {...line("#eee", 1)} />
                <rect x="28.500" y="1.500" width="7" height="5" rx="2" {...line("#eee", 1)} />
                <rect x="32.500" y="4.500" width="7" height="5" rx="2" {...line("#eee", 1)} />
              </svg>
            </Pair>
            {colors.map((c) => <Swatch key={c} aria-label={c} $color={c} />)}
          </Palette>
        </Center>

        <Aside>
          <PanelHead>
            <span>Project</span>
            <HeadIcon><b>?</b></HeadIcon>
            <HeadIcon><svg width="10" height="10"><path d="M2.500 1v6M7.500 1v6M2 1.500h6M0 7.500h10M4.500 7v3M6.500 1v6" {...line("#fff", 1)} /></svg></HeadIcon>
          </PanelHead>
          <Tree>
            {tree.map((n) => (
              <TreeRow key={n.label} $depth={n.depth}>
                {n.depth > 0 && (
                  <Toggle>
                    {n.toggle === "closed" && <svg width="7" height="10"><path d="M1 1v8L5 5z" {...line("#eee", 1)} /></svg>}
                    {n.toggle === "open" && <svg width="7" height="10"><path d="M6 3v6H0z" fill="#fff" /></svg>}
                  </Toggle>
                )}
                <TreeIcon><Icon name={n.icon} size={18} /></TreeIcon>
                <TreeLabel $active={n.active} $selected={n.selected}>
                  <span>{n.label}</span>
                  {n.actions?.map((a) => (
                    <Action key={a} aria-label={a}><Icon name={a} size={18} /></Action>
                  ))}
                </TreeLabel>
              </TreeRow>
            ))}
          </Tree>

          <PanelHead $tall>
            <Icon name="mill" size={18} />
            <span>Toolpaths</span>
            <HeadIcon><svg width="10" height="10"><path d="M5 0l5 5H8v4H2V5H0z" fill="#fff" /></svg></HeadIcon>
            <HeadIcon><svg width="10" height="10"><path d="M1 2h9v1H1zM2 4h8L6 8zM1 8h9v1H1z" fill="#fff" /></svg></HeadIcon>
          </PanelHead>
          <Scrolled>
            <Cells $scrolled>
              <ToolGrid names={["letters", "drillMill", "inlay", "chartMill", "groove", "mills", "door", "grid"]} />
            </Cells>
          </Scrolled>

          <GroupHead><span>3D Toolpaths</span><Chevron /></GroupHead>
          <Cells>
            <ToolGrid names={["relief", "rough", "zLevel", "drill", "starCut", "inspect"]} />
          </Cells>

          <Simulation>
            <GroupHead><span>Simulation</span><Chevron /></GroupHead>
            <Cells $short>
              <CellButton $on aria-label="Simulate All Toolpaths"><Icon name="simulate" /></CellButton>
              <CellButton aria-label="Load simulation"><Icon name="folderCheck" /></CellButton>
            </Cells>
            <Marker />
            <Tooltip role="tooltip">Simulate All Toolpaths</Tooltip>
          </Simulation>
        </Aside>
      </Main>

      <StatusBar>
        <Status $w={76}>X: 1195.632</Status>
        <Status $w={228}>Y: 61.285</Status>
        <Status $w={48} $dim>H:</Status>
      </StatusBar>
    </Window>
  )
}

const GlobalStyle = createGlobalStyle`
  * {
    box-sizing: border-box;
  }
  body {
    margin: 0;
    background: #333;
    overflow-x: hidden;
  }
  button {
    border: 0;
    padding: 0;
    background: none;
    color: inherit;
    font: inherit;
  }
  svg {
    display: block;
    flex-shrink: 0;
  }
`
const Window = styled.div`
  min-height: 100vh;
  display: flex;
  flex-direction: column;
  overflow: hidden;
  background: #333;
  color: #f0f0f0;
  font-family: "Open Sans", "Noto Sans", sans-serif;
  font-size: 12px;
  line-height: 16px;
  white-space: nowrap;
`
const TitleBar = styled.header`
  height: 22px;
  display: flex;
  align-items: center;
  margin-right: -21px;
  background: #fff;
  color: #000;
`
const Title = styled.span`
  flex: 1;
  padding-left: 5px;
`
const WindowButton = styled.button`
  width: 45px;
  height: 22px;
  padding-bottom: 4px;
  display: flex;
  justify-content: center;
  align-items: center;
`
const MenuBar = styled.nav`
  height: 32px;
  display: flex;
  align-items: center;
`
const MenuItem = styled.button`
  padding: 0 5px 0 6px;
  &:nth-of-type(n + 5) {
    padding-right: 4px;
  }
`
const ToolRow = styled.div`
  height: 44px;
  display: flex;
  align-items: center;
`
const Grip = styled.i`
  flex: none;
  align-self: stretch;
  width: 3px;
  margin: 3px 4px 3px 5px;
  background: #5e5e5e;
  ${({ $first }) => $first && css`margin-left: 1px;`}
  ${({ $view }) => $view && css`margin: 1px 4px 3px 3px;`}
`
const Divider = styled.i`
  flex: none;
  width: 1px;
  height: 40px;
  margin: 0 4px 0 3px;
  background: #5e5e5e;
  ${({ $vertical }) => $vertical && css`
    width: 40px;
    height: 1px;
    margin: 3px 0 4px;
  `}
`
const Spacer = styled.i`
  width: 22px;
`
const ToolButton = styled.button`
  position: relative;
  flex: none;
  width: 40px;
  height: 40px;
  display: flex;
  justify-content: center;
  align-items: center;
  ${({ $on }) => $on && css`
    background: #1b1b1b;
    border: 1px solid #5e5e5e;
  `}
  ${({ $menu }) => $menu && css`
    &::after {
      content: "";
      position: absolute;
      right: 2px;
      bottom: 2px;
      border-left: 7px solid transparent;
      border-bottom: 7px solid #666;
    }
  `}
`
const Main = styled.main`
  flex: 1;
  display: grid;
  grid-template-columns: 42px 1fr 256px;
`
const SideBar = styled.aside`
  width: 40px;
  display: flex;
  flex-direction: column;
`
const SideGrip = styled.i`
  height: 3px;
  margin: 3px 1px 4px;
  background: #5e5e5e;
`
const TextTool = styled.button`
  height: 40px;
  font-family: "Liberation Serif", serif;
  font-size: 38px;
  line-height: 40px;
`
const More = styled.button`
  display: flex;
  justify-content: center;
  padding-top: 14px;
`
const Center = styled.section`
  min-width: 0;
  margin-right: 4px;
  display: flex;
  flex-direction: column;
`
const Tabs = styled.div`
  height: 22px;
  display: flex;
  align-items: center;
  padding-left: 3px;
`
const Tab = styled.button`
  position: relative;
  height: 18px;
  padding: 0 8px;
  font-size: 11px;
  ${({ $active }) => $active && css`
    font-weight: bold;
    z-index: 1;
  `}
  span {
    position: relative;
    z-index: 1;
  }
  &::before, &::after {
    content: "";
    position: absolute;
    top: 0;
    bottom: 0;
    border: 1px solid ${({ $active }) => ($active ? "#fff" : "#aaa")};
    border-bottom: 0;
    background: ${({ $active }) => ($active ? "#5a5a5a" : "#333")};
  }
  &::before {
    left: 3px;
    right: 50%;
    border-right: 0;
    border-radius: 5px 0 0 0;
    transform: skewX(-24deg);
  }
  &::after {
    left: 40%;
    right: 0;
    border-left: 0;
    border-radius: 0 5px 0 0;
    transform: skewX(24deg);
  }
`
const TabActions = styled.div`
  display: flex;
  gap: 8px;
  margin-left: auto;
  padding-right: 7px;
`
const PlainButton = styled.button`
  display: flex;
`
const ViewTools = styled.div`
  height: 42px;
  display: flex;
  align-items: center;
  padding-bottom: 2px;
`
const Slider = styled.input`
  appearance: none;
  flex: none;
  width: 127px;
  height: 20px;
  margin: 0 8px;
  background: linear-gradient(#f0f0f0, #f0f0f0) center / 100% 4px no-repeat;
  &::-webkit-slider-thumb {
    appearance: none;
    width: 7px;
    height: 20px;
    background: #f0f0f0;
    border: 1px solid #777;
  }
`
const Viewport = styled.div`
  flex: 1;
  min-height: 400px;
  display: flex;
  justify-content: center;
  align-items: center;
  background: radial-gradient(ellipse farthest-corner, #b6c8d6 0%, #b0c0cc 18%, #99a5ae 35%, #80858d 54%, #707577 71%, #525252 100%);
`
const Palette = styled.div`
  height: 47px;
  display: flex;
  gap: 5px;
  padding: 10px 5px 0;
`
const Pair = styled.div`
  position: relative;
  width: 40px;
  margin-right: 5px;
`
const PairColor = styled.button`
  position: absolute;
  left: ${({ $back }) => ($back ? "15px" : "0")};
  top: ${({ $back }) => ($back ? "11px" : "0")};
  width: 25px;
  height: 20px;
  background: ${({ $back }) => ($back ? "#fff" : "#000")};
  border: 1px solid #5e5e5e;
`
const Swatch = styled.button`
  width: 30px;
  height: 30px;
  border: 1px solid #5e5e5e;
  background: ${({ $color }) => $color};
`
const Aside = styled.aside`
  display: flex;
  flex-direction: column;
`
const PanelHead = styled.h2`
  height: ${({ $tall }) => ($tall ? "22px" : "18px")};
  margin: 0;
  padding-left: 4px;
  display: flex;
  align-items: center;
  overflow: hidden;
  background: #31578a;
  font-size: 12px;
  line-height: 18px;
  font-weight: normal;
  span {
    flex: 1;
    padding-left: ${({ $tall }) => ($tall ? "4px" : "0")};
  }
`
const HeadIcon = styled.button`
  width: 17px;
  display: flex;
  justify-content: center;
  &:last-child {
    margin-right: -5px;
  }
`
const Tree = styled.ul`
  flex: 1;
  margin: 0;
  padding: 2px 0 0;
  list-style: none;
`
const TreeRow = styled.li`
  height: 20px;
  display: flex;
  align-items: center;
  padding-left: ${({ $depth }) => ($depth ? $depth * 23 - 13 : 3)}px;
`
const Toggle = styled.span`
  width: 16px;
  display: flex;
  justify-content: center;
`
const TreeIcon = styled.span`
  width: 20px;
  display: flex;
  justify-content: center;
`
const TreeLabel = styled.div`
  flex: 1;
  height: 20px;
  margin-left: 3px;
  padding-right: 1px;
  display: flex;
  align-items: center;
  background: ${({ $selected }) => ($selected ? "#5c5c5c" : "none")};
  span {
    flex: 1;
    color: ${({ $active }) => ($active ? "#ffeb3b" : "inherit")};
    font-weight: ${({ $active }) => ($active ? "bold" : "normal")};
  }
`
const Action = styled.button`
  width: 22px;
  display: flex;
  justify-content: flex-end;
`
const Scrolled = styled.div`
  height: 84px;
  overflow: hidden;
`
const Cells = styled.div`
  display: flex;
  flex-wrap: wrap;
  gap: 8px 6px;
  padding-bottom: 6px;
  ${({ $scrolled }) => $scrolled && css`margin-top: -17px;`}
  ${({ $short }) => $short && css`padding: 0 0 0 1px;`}
`
const CellButton = styled.button`
  width: 44px;
  height: 42px;
  display: flex;
  justify-content: center;
  align-items: center;
  ${({ $on }) => $on && css`background: #5c5c5c;`}
`
const GroupHead = styled.h3`
  height: 16px;
  margin: 0;
  padding-left: 3px;
  display: flex;
  justify-content: space-between;
  align-items: center;
  background: #31578a;
  color: #fff;
  font-size: 13px;
  line-height: 18px;
  font-weight: normal;
  svg {
    margin-right: -5px;
  }
`
const Simulation = styled.section`
  position: relative;
  height: 71px;
  ${GroupHead} {
    height: 17px;
  }
  ${CellButton} {
    height: 38px;
    margin-top: 1px;
  }
`
const Marker = styled.i`
  position: absolute;
  left: -8px;
  top: -8px;
  width: 85px;
  height: 69px;
  border: 5px solid #ffee00;
`
const Tooltip = styled.div`
  position: absolute;
  left: 45px;
  top: 68px;
  z-index: 1;
  padding: 0 3px;
  border: 1px solid #767676;
  background: #fff;
  color: #575757;
`
const StatusBar = styled.footer`
  height: 16px;
  display: flex;
  justify-content: flex-end;
  line-height: 18px;
`
const Status = styled.span`
  width: ${({ $w }) => $w}px;
  color: ${({ $dim }) => ($dim ? "#707070" : "inherit")};
`
